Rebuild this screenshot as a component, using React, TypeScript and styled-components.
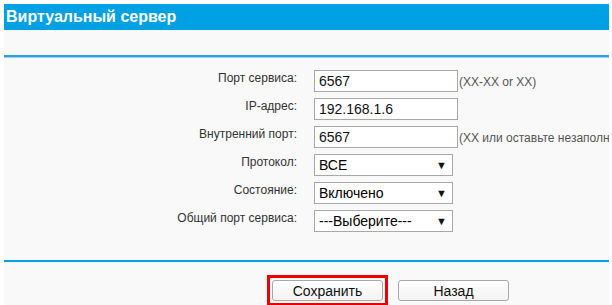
import React from 'react';
import styled, { createGlobalStyle } from 'styled-components';

const GlobalStyle = createGlobalStyle`
  html, body {
    margin: 0;
    padding: 0;
    background: #ffffff;
    font-family: "Liberation Sans", Arial, sans-serif;
  }
`;

const Page = styled.div`
  width: 605px;
  margin: 4px 0 0 4px;
  background: #f9f9f9;
  overflow: hidden;
`;

const Header = styled.div`
  height: 26px;
  background: #00a0e4;
  color: #ffffff;
  font-size: 16px;
  font-weight: bold;
  line-height: 26px;
  padding-left: 2px;
  white-space: nowrap;
`;

const TopRule = styled.div`
  margin-top: 25px;
  height: 2px;
  background: #2d9fe0;
  border-bottom: 1px solid #8fd4f4;
`;

const Form = styled.div`
  display: grid;
  grid-template-columns: 293px 1fr;
  column-gap: 17px;
  row-gap: 6px;
  padding-top: 12px;
  padding-bottom: 28px;
`;

const Label = styled.div`
  text-align: right;
  font-size: 12px;
  line-height: 16px;
  color: #333333;
  white-space: nowrap;
`;

const Field = styled.div`
  display: flex;
  align-items: center;
  height: 22px;
  white-space: nowrap;
  overflow: hidden;
`;

const TextBox = styled.div`
  box-sizing: border-box;
  width: 144px;
  height: 22px;
  border: 1px solid #a9a9a9;
  background: #ffffff;
  padding-left: 4px;
  font-size: 14px;
  line-height: 20px;
  color: #111111;
  flex-shrink: 0;
`;

const Hint = styled.span`
  font-size: 12px;
  color: #555555;
  padding-left: 1px;
  padding-top: 2px;
`;

const SelectBox = styled.div`
  box-sizing: border-box;
  width: 139px;
  height: 22px;
  border: 1px solid #a9a9a9;
  background: #ffffff;
  display: flex;
  align-items: center;
  justify-content: space-between;
  padding: 0 5px 0 4px;
  font-size: 14px;
  color: #000000;
`;

const Arrow = styled.span`
  font-size: 11px;
  color: #111111;
`;

const BottomRule = styled.div`
  height: 2px;
  background: #00a0e8;
  border-bottom: 1px solid #e6f4fb;
`;

const Actions = styled.div`
  display: flex;
  align-items: center;
  padding: 12px 0 1px 263px;
`;

const Marker = styled.div`
  border: 3px solid #ee0000;
  padding: 2px;
  margin-right: 10px;
  display: flex;
`;

const Button = styled.button`
  box-sizing: border-box;
  width: 111px;
  height: 21px;
  border: 1px solid #a8a8a8;
  border-radius: 3px;
  background: linear-gradient(#ffffff, #f2f2f2);
  font-family: "Liberation Sans", Arial, sans-serif;
  font-size: 14px;
  color: #111111;
  padding: 0;
`;

const rows = [
  { label: 'Порт сервиса:', kind: 'text', value: '6567', hint: '(XX-XX or XX)' },
  { label: 'IP-адрес:', kind: 'text', value: '192.168.1.6' },
  { label: 'Внутренний порт:', kind: 'text', value: '6567', hint: '(XX или оставьте незаполн' },
  { label: 'Протокол:', kind: 'select', value: 'ВСЕ' },
  { label: 'Состояние:', kind: 'select', value: 'Включено' },
  { label: 'Общий порт сервиса:', kind: 'select', value: '---Выберите---' },
];

export default function App() {
  return (
    <>
      <GlobalStyle />
      <Page>
        <Header>Виртуальный сервер</Header>
        <TopRule />
        <Form>
          {rows.map((row) => (
            <React.Fragment key={row.label}>
              <Label>{row.label}</Label>
              <Field>
                {row.kind === 'text' ? (
                  <>
                    <TextBox>{row.value}</TextBox>
                    {row.hint && <Hint>{row.hint}</Hint>}
                  </>
                ) : (
                  <SelectBox>
                    <span>{row.value}</span>
                    <Arrow>▼</Arrow>
                  </SelectBox>
                )}
              </Field>
            </React.Fragment>
          ))}
        </Form>
        <BottomRule />
        <Actions>
          <Marker>
            <Button>Сохранить</Button>
          </Marker>
          <Button>Назад</Button>
        </Actions>
      </Page>
    </>
  );
}
